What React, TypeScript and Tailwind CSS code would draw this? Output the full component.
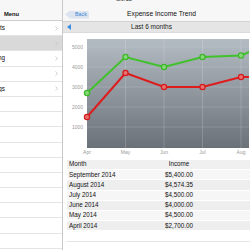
import React from 'react';

const menuRows = [
  { label: 'Accounts', chevron: true },
  { label: 'Expenses', chevron: true, selected: true, hidden: true },
  { label: 'Budgeting', chevron: true },
  { label: 'Reports', chevron: true, hidden: true },
  { label: 'Settings', chevron: true },
  { label: '', chevron: false },
  { label: '', chevron: false },
  { label: '', chevron: false },
  { label: '', chevron: false },
  { label: '', chevron: false },
  { label: '', chevron: false },
  { label: '', chevron: false },
  { label: '', chevron: false },
  { label: '', chevron: false },
  { label: '', chevron: false },
];

const rows = [
  { month: 'September 2014', income: '$5,400.00' },
  { month: 'August 2014', income: '$4,574.35' },
  { month: 'July 2014', income: '$4,500.00' },
  { month: 'June 2014', income: '$4,000.00' },
  { month: 'May 2014', income: '$4,500.00' },
  { month: 'April 2014', income: '$2,700.00' },
];

const xs = [24, 62.5, 101, 139.5, 178, 216.5];
const months = ['Apr', 'May', 'Jun', 'Jul', 'Aug'];
const income = [2700, 4500, 4000, 4500, 4574.35, 5400];
const expense = [1500, 3700, 3000, 3000, 3500, 3500];
const y = (v: number) => 114 - v * 0.02;

const Chart: React.FC = () => {
  const line = (data: number[]) => data.map((v, i) => `${xs[i]},${y(v)}`).join(' ');
  return (
    <svg width="186" height="126" viewBox="0 0 186 126" className="block">
      <defs>
        <linearGradient id="plot" x1="0" y1="0" x2="0" y2="1">
          <stop offset="0" stopColor="#b3bbc3" />
          <stop offset="1" stopColor="#6b7179" />
        </linearGradient>
      </defs>
      <rect x="24" y="6" width="170" height="109" fill="url(#plot)" />
      {/* grid */}
      {[14, 34, 54, 74, 94].map((gy) => (
        <line key={gy} x1="24" x2="186" y1={gy} y2={gy} stroke="#ffffff" strokeOpacity="0.18" strokeWidth="0.8" />
      ))}
      {xs.slice(1, 5).map((gx) => (
        <line key={gx} x1={gx} x2={gx} y1="6" y2="115" stroke="#ffffff" strokeOpacity="0.22" strokeWidth="0.8" />
      ))}
      {/* y labels */}
      {[5000, 4000, 3000, 2000, 1000].map((v, i) => (
        <text key={v} x="20" y={14 + i * 20 + 1.7} fontSize="5" textAnchor="end" fill="#9a9a9a" fontFamily="'Liberation Sans', Arial, sans-serif">
          {v}
        </text>
      ))}
      {/* x labels */}
      {months.map((m, i) => (
        <text key={m} x={xs[i]} y="121" fontSize="5" textAnchor="middle" fill="#9a9a9a" fontFamily="'Liberation Sans', Arial, sans-serif">
          {m}
        </text>
      ))}
      <polyline points={line(income)} fill="none" stroke="#41c12b" strokeWidth="2" />
      <polyline points={line(expense)} fill="none" stroke="#dd1d1d" strokeWidth="2" />
      {income.slice(0, 5).map((v, i) => (
        <circle key={'g' + i} cx={xs[i]} cy={y(v)} r="2.6" fill="#86d77a" stroke="#3bb826" strokeWidth="1.2" />
      ))}
      {expense.slice(0, 5).map((v, i) => (
        <circle key={'r' + i} cx={xs[i]} cy={y(v)} r="2.6" fill="#e87272" stroke="#d41a1a" strokeWidth="1.2" />
      ))}
    </svg>
  );
};

const App: React.FC = () => {
  return (
    <div className="flex w-[250px] h-[250px] overflow-hidden bg-white font-['Liberation_Sans',Arial,sans-serif] text-[#111]">
      {/* Master panel */}
      <div className="flex flex-col w-[63px] shrink-0 border-r border-[#c9c9cc]">
        <div className="flex items-center h-[21px] bg-[#f7f7f7] border-b border-[#cfcfd2] pl-[4px] pt-[10px]">
          <span className="text-[5.8px] font-semibold leading-none">Menu</span>
        </div>
        {menuRows.map((r, i) => (
          <div
            key={i}
            className={`flex items-center shrink-0 h-[15.2px] border-b border-[#e4e4e6] ${r.selected ? 'bg-[#d9d9d9]' : 'bg-white'}`}
          >
            <div className="flex justify-end w-[5px] overflow-hidden">
              <span className={`whitespace-nowrap text-[6.4px] leading-none ${r.hidden ? 'invisible' : ''}`}>{r.label}</span>
            </div>
            <div className="flex-1" />
            {r.chevron && (
              <svg width="3" height="5" viewBox="0 0 3 5" className="mr-[4px]">
                <polyline points="0.5,0.5 2.5,2.5 0.5,4.5" fill="none" stroke="#c3c3c7" strokeWidth="0.8" />
              </svg>
            )}
          </div>
        ))}
      </div>

      {/* Detail panel */}
      <div className="flex flex-col flex-1 min-w-0">
        <div className="relative flex items-center h-[22px] bg-[#f7f7f7] border-b border-[#d2d2d4] pt-[8px]">
          <span className="absolute top-[-1px] left-[53px] text-[3.6px] font-bold leading-none text-[#333]">12:07 AM</span>
          <div className="flex items-center justify-end w-[24px] h-[8px] ml-[2px] pr-[2px] bg-[#dce5ef] [clip-path:polygon(0_50%,5px_0,100%_0,100%_100%,5px_100%)] rounded-r-[2px]">
            <span className="text-[5.4px] leading-none text-[#3f86d6]">Back</span>
          </div>
          <div className="flex-1 flex justify-center pr-[16px]">
            <span className="text-[6.7px] leading-none">Expense Income Trend</span>
          </div>
        </div>
        <div className="flex items-center h-[11px] bg-[#e5e5e5] border-b border-[#dadada]">
          <svg width="4" height="6" viewBox="0 0 4 6" className="ml-[4px]">
            <polygon points="0,3 4,0 4,6" fill="#3a8de0" />
          </svg>
          <div className="flex-1 flex justify-center pr-[18px]">
            <span className="text-[6.5px] leading-none text-[#222]">Last 6 months</span>
          </div>
        </div>
        <Chart />
        <div className="flex flex-col gap-px ml-[4px] mt-px">
          <div className="grid grid-cols-[62px_96px] items-center h-[9.2px] bg-[#f0f0f0] pl-[2px] text-[6.3px] leading-none">
            <span>Month</span>
            <span className="text-center">Income</span>
          </div>
          {rows.map((r, i) => (
            <div
              key={r.month}
              className={`grid grid-cols-[62px_96px] items-center h-[9.2px] pl-[2px] text-[6.3px] leading-none ${i % 2 === 0 ? 'bg-[#f6f6f6]' : 'bg-[#eeeeee]'}`}
            >
              <span className="whitespace-nowrap">{r.month}</span>
              <span className="text-center">{r.income}</span>
            </div>
          ))}
        </div>
        <div className="ml-[3px] mt-[11px] h-px bg-[#e6e6e6]" />
      </div>
    </div>
  );
};

export default App;
